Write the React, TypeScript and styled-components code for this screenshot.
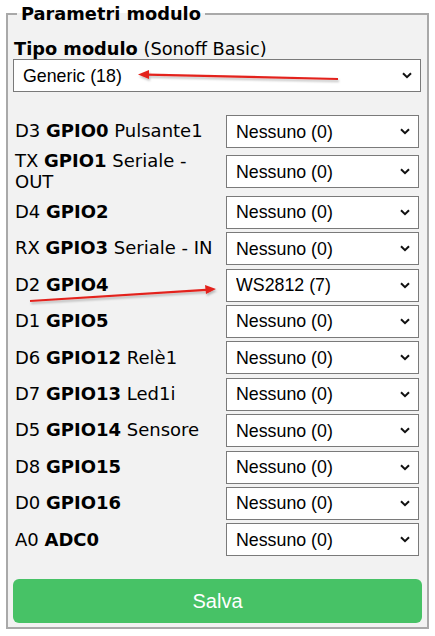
import React from "react";
import styled, { createGlobalStyle } from "styled-components";

interface Pin {
    pre: string;
    gpio: string;
    name?: React.ReactNode;
    value: string;
}

const pins: Pin[] = [
    { pre: "D3", gpio: "GPIO0", name: "Pulsante1", value: "Nessuno (0)" },
    { pre: "TX", gpio: "GPIO1", name: <>Seriale -<br />OUT</>, value: "Nessuno (0)" },
    { pre: "D4", gpio: "GPIO2", value: "Nessuno (0)" },
    { pre: "RX", gpio: "GPIO3", name: "Seriale - IN", value: "Nessuno (0)" },
    { pre: "D2", gpio: "GPIO4", value: "WS2812 (7)" },
    { pre: "D1", gpio: "GPIO5", value: "Nessuno (0)" },
    { pre: "D6", gpio: "GPIO12", name: "Relè1", value: "Nessuno (0)" },
    { pre: "D7", gpio: "GPIO13", name: "Led1i", value: "Nessuno (0)" },
    { pre: "D5", gpio: "GPIO14", name: "Sensore", value: "Nessuno (0)" },
    { pre: "D8", gpio: "GPIO15", value: "Nessuno (0)" },
    { pre: "D0", gpio: "GPIO16", value: "Nessuno (0)" },
    { pre: "A0", gpio: "ADC0", value: "Nessuno (0)" },
];

const GlobalStyle = createGlobalStyle`
    body {
        margin: 0;
        background: #ffffff;
        font-family: "DejaVu Sans", Verdana, sans-serif;
        font-size: 18px;
        color: #000;
    }
`;

const Page = styled.div`
    position: relative;
    width: 435px;
    height: 636px;
    padding-top: 3px;
    box-sizing: border-box;
`;

const FieldSet = styled.fieldset`
    margin: 0 6px 0 6px;
    padding: 0 6px 4px 5px;
    border: 2px solid #a9a9a9;
    background: #f2f2f2;
    min-width: 0;
`;

const Legend = styled.legend`
    font-weight: bold;
    font-size: 17.8px;
    line-height: 21px;
    padding: 0 4px;
    margin-left: 4px;
`;

const TypeLabel = styled.div`
    line-height: 21px;
    margin-top: 14px;
    padding-left: 1px;
    font-size: 17.8px;
`;

const SelectWrap = styled.div<{ $full?: boolean }>`
    position: relative;
    width: ${(p) => (p.$full ? "408px" : "193px")};
    height: 33px;
`;

const Select = styled.select`
    appearance: none;
    width: 100%;
    height: 100%;
    box-sizing: border-box;
    border: 1px solid #7a7a7a;
    border-radius: 0;
    background: #ffffff;
    color: #000;
    font-family: "Liberation Sans", Arial, sans-serif;
    font-size: 17.8px;
    padding: 0 0 0 9px;
    margin: 0;
`;

const Chevron = styled.svg`
    position: absolute;
    right: 9px;
    top: 13px;
    width: 10px;
    height: 7px;
    pointer-events: none;
`;

const PinGrid = styled.div`
    display: grid;
    grid-template-columns: 211px 193px;
    column-gap: 2px;
    row-gap: 3.4px;
    align-items: center;
    margin-top: 23px;
`;

const PinLabel = styled.div`
    line-height: 20.5px;
    padding-left: 2px;
`;

const SaveButton = styled.button`
    display: block;
    width: 409px;
    height: 44px;
    margin-top: 22.6px;
    border: 0;
    border-radius: 6px;
    background: #47c266;
    color: #ffffff;
    font-family: "Liberation Sans", Arial, sans-serif;
    font-size: 20px;
    line-height: 44px;
    padding: 0;
`;

const Overlay = styled.svg`
    position: absolute;
    left: 0;
    top: 0;
    pointer-events: none;
`;

const Dropdown: React.FC<{ value: string; full?: boolean }> = ({ value, full }) => (
    <SelectWrap $full={full}>
        <Select defaultValue={value}>
            <option>{value}</option>
        </Select>
        <Chevron viewBox="0 0 10 7">
            <path d="M1 1.2 L5 5.2 L9 1.2" fill="none" stroke="#111" strokeWidth="2" />
        </Chevron>
    </SelectWrap>
);

export default function App() {
    return (
        <>
            <GlobalStyle />
            <Page>
                <FieldSet>
                    <Legend>Parametri modulo</Legend>
                    <TypeLabel>
                        <b>Tipo modulo</b> (Sonoff Basic)
                    </TypeLabel>
                    <Dropdown value="Generic (18)" full />
                    <PinGrid>
                        {pins.map((p) => (
                            <React.Fragment key={p.gpio}>
                                <PinLabel>
                                    {p.pre} <b>{p.gpio}</b> {p.name}
                                </PinLabel>
                                <Dropdown value={p.value} />
                            </React.Fragment>
                        ))}
                    </PinGrid>
                    <SaveButton>Salva</SaveButton>
                </FieldSet>
                <Overlay width="435" height="636" viewBox="0 0 435 636">
                    <defs>
                        <filter id="sh" x="-10%" y="-200%" width="120%" height="500%">
                            <feDropShadow dx="1" dy="2" stdDeviation="1.2" floodColor="#000" floodOpacity="0.25" />
                        </filter>
                    </defs>
                    <g filter="url(#sh)" fill="#e3231d" stroke="#e3231d">
                        <line x1="338" y1="79" x2="147" y2="74.6" strokeWidth="2.2" />
                        <polygon points="138,74.5 149,70 149,79" stroke="none" />
                        <line x1="30" y1="301" x2="206" y2="289.8" strokeWidth="2.2" />
                        <polygon points="216,289 205,285 206,294" stroke="none" />
                    </g>
                </Overlay>
            </Page>
        </>
    );
}
